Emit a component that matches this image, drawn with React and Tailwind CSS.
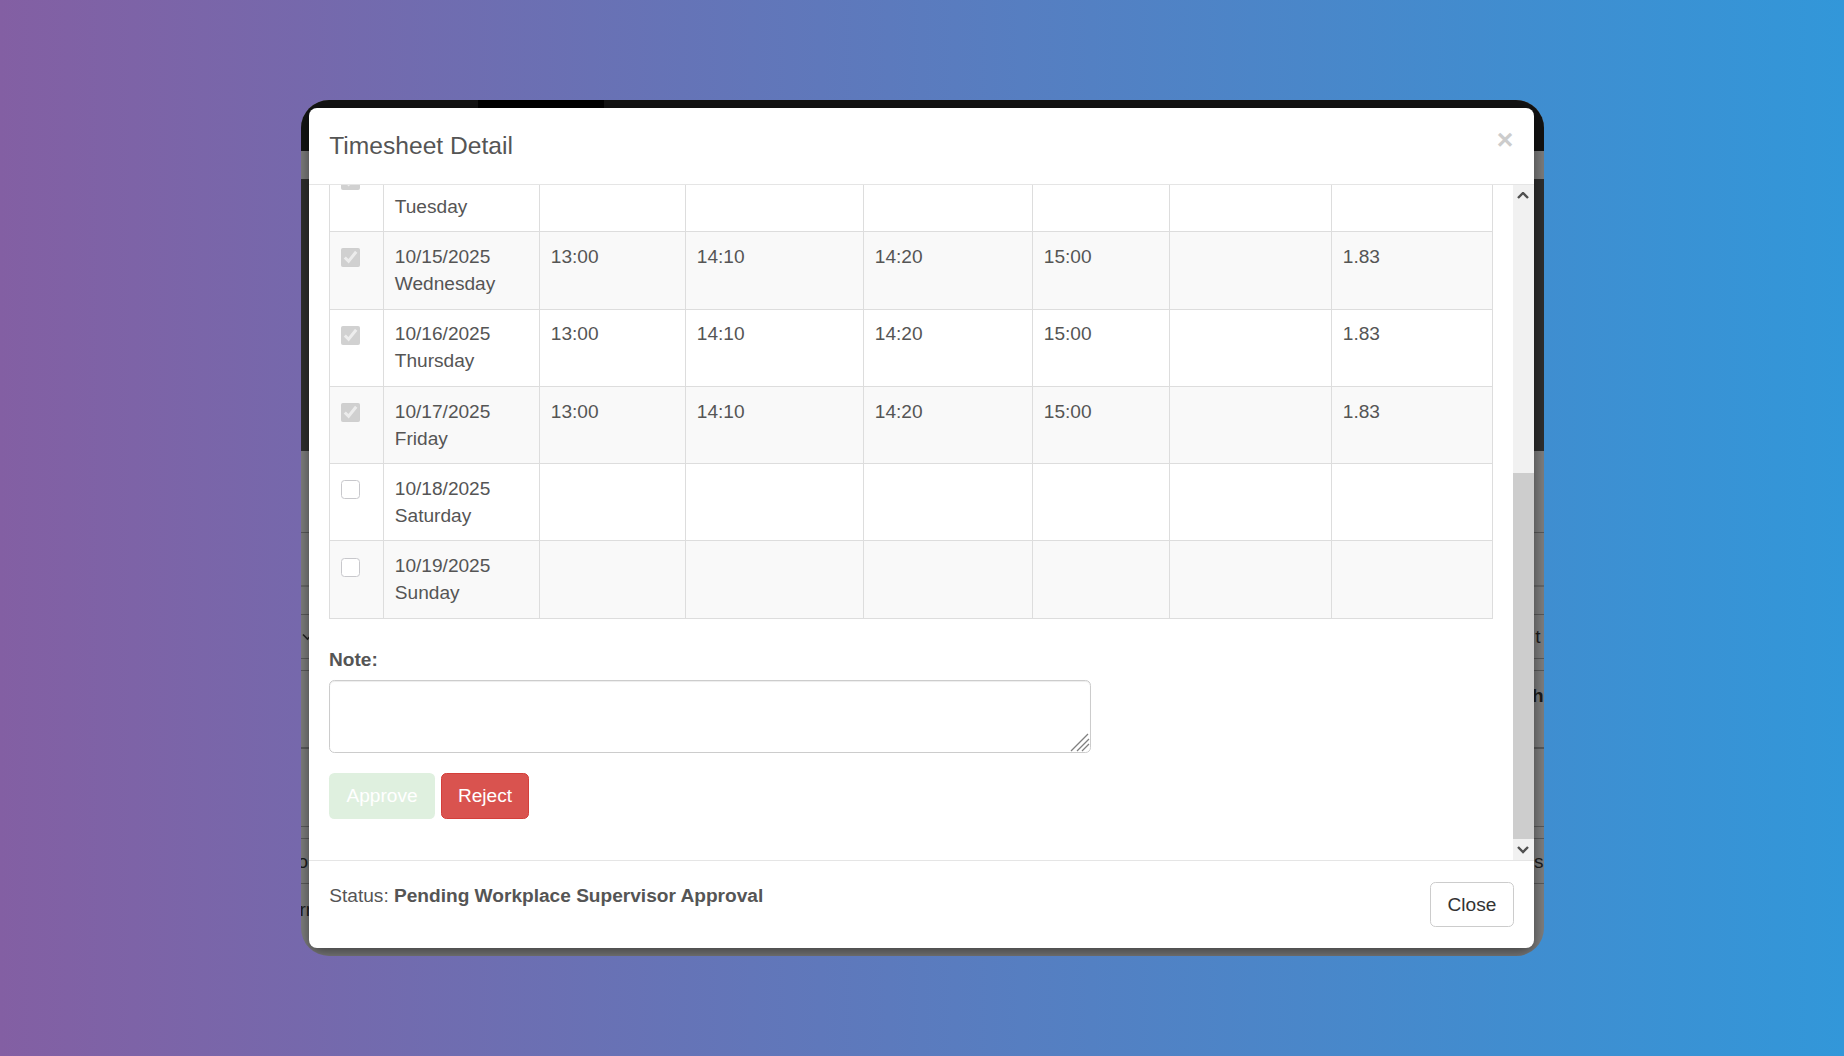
import React from 'react';

const FONT = 'font-["Liberation_Sans",Arial,sans-serif]';

const rows = [
  { day: 'Tuesday', checked: true },
  { date: '10/15/2025', day: 'Wednesday', checked: true, start: '13:00', out: '14:10', back: '14:20', end: '15:00', total: '1.83' },
  { date: '10/16/2025', day: 'Thursday', checked: true, start: '13:00', out: '14:10', back: '14:20', end: '15:00', total: '1.83' },
  { date: '10/17/2025', day: 'Friday', checked: true, start: '13:00', out: '14:10', back: '14:20', end: '15:00', total: '1.83' },
  { date: '10/18/2025', day: 'Saturday', checked: false },
  { date: '10/19/2025', day: 'Sunday', checked: false },
];

const cell = 'border border-[#ddd] px-[10.8px] py-[10.8px] align-top';

function Backdrop() {
  return (
    <div className="flex h-full flex-col bg-[#808080] text-[19px] leading-[27px] text-[#1c1c1c]">
      <div className="flex h-[51px] bg-[#131313]">
        <div className="ml-[177px] h-full w-[126px] bg-black" />
      </div>
      <div className="h-[28px] bg-[#7e7e7e]" />
      <div className="h-[272px] bg-[#2f2f2f]" />
      <div className="h-[82px] border-b border-[#5c5c5c]" />
      <div className="h-[54px] border-b-2 border-[#6a6a6a]" />
      <div className="h-[28px] border-b border-[#5c5c5c]" />
      <div className="flex h-[44px] items-center justify-between overflow-hidden border-b border-[#5c5c5c]">
        <svg width="12" height="8" viewBox="0 0 12 8" className="ml-[1px]">
          <path d="M1 1.5l4.5 4.5 4.5-4.5" fill="none" stroke="#222" strokeWidth="1.6" />
        </svg>
        <span className="mr-[3px]">t</span>
      </div>
      <div className="h-[12px] border-b border-[#5c5c5c]" />
      <div className="flex h-[78px] items-start justify-end overflow-hidden border-b-2 border-[#5c5c5c] pt-[11px]">
        <span className="font-bold">h</span>
      </div>
      <div className="h-[78px] border-b border-[#5c5c5c]" />
      <div className="h-[12px] border-b border-[#5c5c5c]" />
      <div className="flex h-[45px] items-center justify-between overflow-hidden border-b border-[#5c5c5c]">
        <span className="-ml-[3px]">o</span>
        <span>s</span>
      </div>
      <div className="flex flex-1 items-start overflow-hidden pt-[12px]">
        <span className="-ml-[1px]">rr</span>
      </div>
    </div>
  );
}

function Scrollbar() {
  return (
    <div className="flex w-[21px] shrink-0 flex-col bg-[#f1f1f1]">
      <div className="flex h-[21px] items-center justify-center">
        <svg width="12" height="8" viewBox="0 0 12 8">
          <path d="M1 6L6 1l5 5" fill="none" stroke="#505050" strokeWidth="2.4" />
        </svg>
      </div>
      <div className="h-[267px]" />
      <div className="flex-1 bg-[#cdcdcd]" />
      <div className="flex h-[21px] items-center justify-center">
        <svg width="12" height="8" viewBox="0 0 12 8">
          <path d="M1 1l5 5 5-5" fill="none" stroke="#505050" strokeWidth="2.4" />
        </svg>
      </div>
    </div>
  );
}

export default function App() {
  return (
    <div className={`flex h-screen w-full items-center justify-center bg-[linear-gradient(to_right,#835fa3,#3297d9)] ${FONT}`}>
      <div className="relative h-[856px] w-[1243px] overflow-hidden rounded-[28px]">
        <Backdrop />

        <div className="absolute top-[8px] right-[10px] bottom-[8px] left-[8px] flex flex-col rounded-[8px] bg-white text-[19.1px] leading-[27px] text-[#555] shadow-[0_5px_15px_rgba(0,0,0,0.5)]">
          <div className="flex items-start justify-between border-b border-[#e5e5e5] pt-[20px] pr-[20.25px] pb-[21px] pl-[20.75px]">
            <h4 className="text-[24.6px] leading-[35px] font-normal">Timesheet Detail</h4>
            <button className="-mt-[2.7px] text-[28.35px] leading-none font-bold text-[#ccc]">×</button>
          </div>

          <div className="flex min-h-0 flex-1">
            <div className="min-w-0 flex-1 overflow-hidden pr-[20px] pl-[20.5px]">
              <table className="-mt-[31px] w-[1163px] table-fixed border-collapse">
                <colgroup>
                  <col className="w-[54px]" />
                  <col className="w-[156px]" />
                  <col className="w-[146px]" />
                  <col className="w-[178px]" />
                  <col className="w-[169px]" />
                  <col className="w-[137px]" />
                  <col className="w-[162px]" />
                  <col className="w-[161px]" />
                </colgroup>
                <tbody>
                  {rows.map((r, idx) => (
                    <tr key={r.day} className={`h-[77.3px] ${idx % 2 === 1 ? 'bg-[#f9f9f9]' : 'bg-white'}`}>
                      <td className={cell}>
                        {r.checked ? (
                          <input type="checkbox" disabled checked readOnly className="mt-[5.4px] block h-[19px] w-[19px]" />
                        ) : (
                          <input type="checkbox" disabled className="mt-[5.4px] block h-[19px] w-[19px] appearance-none rounded-[3.5px] border border-[#c8c8cc] bg-white" />
                        )}
                      </td>
                      <td className={cell}>
                        {r.date}
                        <br />
                        {r.day}
                      </td>
                      <td className={cell}>{r.start}</td>
                      <td className={cell}>{r.out}</td>
                      <td className={cell}>{r.back}</td>
                      <td className={cell}>{r.end}</td>
                      <td className={cell}></td>
                      <td className={cell}>{r.total}</td>
                    </tr>
                  ))}
                </tbody>
              </table>

              <label className="mt-[27px] mb-[7px] block font-bold">Note:</label>
              <div className="relative w-[762px]">
                <textarea className="block h-[73px] w-full resize-none rounded-[5.4px] border border-[#ccc] shadow-[inset_0_1px_1px_rgba(0,0,0,0.075)] outline-none"></textarea>
                <svg width="20" height="20" viewBox="0 0 20 20" className="absolute right-[1px] bottom-[1px]">
                  <path d="M18 2L1 19M19 7L7 19M19 12L12 19" fill="none" stroke="#808080" strokeWidth="1.3" />
                </svg>
              </div>

              <div className="mt-[20px] flex gap-[6px]">
                <button disabled className="h-[46px] w-[106px] rounded-[5.4px] bg-[#dff0df] text-white">Approve</button>
                <button className="h-[46px] w-[88px] rounded-[5.4px] border border-[#d43f3a] bg-[#d9534f] text-white">Reject</button>
              </div>
            </div>
            <Scrollbar />
          </div>

          <div className="flex h-[88px] items-start justify-between border-t border-[#e5e5e5] pt-[21px] pr-[19.5px] pl-[20.75px]">
            <div>
              Status: <b>Pending Workplace Supervisor Approval</b>
            </div>
            <button className="h-[45px] w-[84px] rounded-[5.4px] border border-[#ccc] bg-white text-[#333]">Close</button>
          </div>
        </div>
      </div>
    </div>
  );
}
